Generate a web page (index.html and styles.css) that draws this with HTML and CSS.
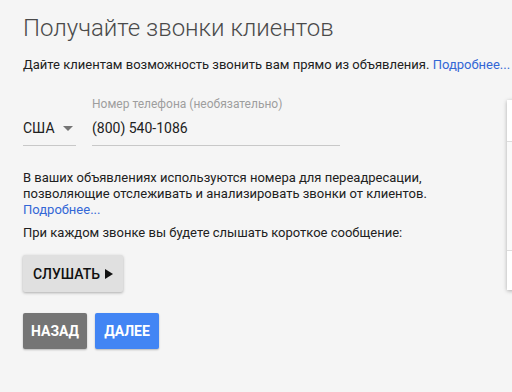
FILE: index.html
```html
<!DOCTYPE html>
<html>
<head>
<meta charset="utf-8">
<link rel="stylesheet" href="styles.css">
</head>
<body>
<div class="page">
  <main class="content">
    <h1 class="title">Получайте звонки клиентов</h1>
    <p class="lead">Дайте клиентам возможность звонить вам прямо из объявления. <a class="link" href="#">Подробнее...</a></p>
    <div class="phone-row">
      <div class="country">
        <span class="country-name">США</span>
        <span class="caret"></span>
      </div>
      <div class="phone">
        <label class="phone-label">Номер телефона (необязательно)</label>
        <div class="phone-value">(800) 540-1086</div>
      </div>
    </div>
    <p class="note">В ваших объявлениях используются номера для переадресации, позволяющие отслеживать и анализировать звонки от клиентов. <a class="link" href="#">Подробнее...</a></p>
    <p class="note2">При каждом звонке вы будете слышать короткое сообщение:</p>
    <button class="btn btn-listen">СЛУШАТЬ <span class="play"></span></button>
    <div class="actions">
      <button class="btn btn-back">НАЗАД</button>
      <button class="btn btn-next">ДАЛЕЕ</button>
    </div>
  </main>
  <aside class="side-card">
    <div class="side-top"></div>
    <div class="side-mid"></div>
    <div class="side-bottom"></div>
  </aside>
</div>
</body>
</html>
```
FILE: styles.css
```css
* { box-sizing: border-box; }
html, body { margin: 0; padding: 0; }
body {
  background: #f5f5f5;
  font-family: Roboto, "Liberation Sans", sans-serif;
  color: #212121;
  width: 512px;
  height: 392px;
  overflow: hidden;
}
.page {
  display: flex;
  align-items: flex-start;
}
.content {
  width: 507px;
  padding: 13px 0 0 23px;
  flex: none;
}
.title {
  margin: 0;
  font-size: 24px;
  font-weight: 300;
  color: #4a4a4a;
  line-height: 30px;
  white-space: nowrap;
}
.lead {
  margin: 14px 0 0;
  font-size: 13px;
  line-height: 16px;
  white-space: nowrap;
  color: #212121;
}
.link { color: #3367d6; text-decoration: none; }
.phone-row {
  display: flex;
  gap: 16px;
  margin-top: 24px;
}
.country {
  width: 53px;
  margin-top: 23px;
  height: 26px;
  border-bottom: 1px solid #c8c8c8;
  display: flex;
  align-items: flex-start;
  gap: 8px;
  font-size: 14px;
}
.country-name { line-height: 17px; }
.caret {
  width: 0; height: 0;
  border-left: 5px solid transparent;
  border-right: 5px solid transparent;
  border-top: 5px solid #757575;
  margin-top: 6px;
}
.phone {
  width: 248px;
  border-bottom: 1px solid #c8c8c8;
  height: 49px;
}
.phone-label {
  display: block;
  font-size: 12px;
  color: #9e9e9e;
  line-height: 14px;
}
.phone-value {
  margin-top: 9px;
  font-size: 14px;
  line-height: 17px;
}
.note {
  margin: 24px 0 0;
  width: 420px;
  font-size: 13px;
  line-height: 16px;
}
.note2 {
  margin: 7px 0 0;
  font-size: 13px;
  line-height: 16px;
}
.btn {
  border: none;
  border-radius: 2px;
  font-family: Roboto, "Liberation Sans", sans-serif;
  font-size: 14px;
  font-weight: 500;
  cursor: pointer;
  padding: 0;
}
.btn-listen {
  margin-top: 14px;
  width: 100px;
  height: 37px;
  background: #e0e0e0;
  color: #111;
  box-shadow: 0 1px 3px rgba(0,0,0,0.3);
  display: flex;
  align-items: center;
  justify-content: center;
  gap: 5px;
}
.play {
  width: 0; height: 0;
  border-top: 5px solid transparent;
  border-bottom: 5px solid transparent;
  border-left: 8px solid #111;
}
.actions {
  display: flex;
  gap: 8px;
  margin-top: 21px;
}
.btn-back, .btn-next {
  width: 64px;
  height: 36px;
  color: #fff;
  font-weight: 700;
  box-shadow: 0 1px 2px rgba(0,0,0,0.25);
}
.btn-back { background: #757575; }
.btn-next { background: #4285f4; }
.side-card {
  margin-top: 100px;
  width: 20px;
  height: 190px;
  background: #fff;
  box-shadow: 0 1px 4px rgba(0,0,0,0.3);
  display: flex;
  flex-direction: column;
  flex: none;
}
.side-top { height: 42px; border-bottom: 1px solid #ddd; }
.side-mid { height: 109px; border-bottom: 1px solid #ddd; background: #fafafa; }
.side-bottom { flex: 1; }
```
